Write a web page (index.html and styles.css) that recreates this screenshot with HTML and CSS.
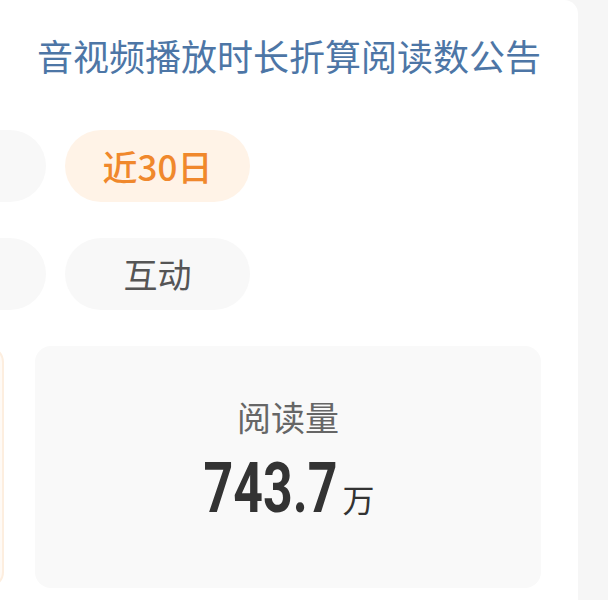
FILE: index.html
```html
<!DOCTYPE html>
<html lang="zh-CN">
<head>
  <meta charset="UTF-8" />
  <meta name="viewport" content="width=device-width, initial-scale=1.0" />
  <title>阅读数据</title>
  <link rel="stylesheet" href="styles.css">
</head>
<body>

  <div class="panel">
    <div class="notice">音视频播放时长折算阅读数公告</div>

    <!-- 时间筛选 (前一项已滑出可视区) -->
    <div class="pill-row">
      <div class="pill"></div>
      <div class="pill active">近30日</div>
    </div>

    <!-- 类型筛选 -->
    <div class="pill-row">
      <div class="pill"></div>
      <div class="pill">互动</div>
    </div>

    <!-- 数据卡片 -->
    <div class="card-row">
      <div class="stat-card selected"></div>
      <div class="stat-card">
        <div class="stat-label">阅读量</div>
        <div class="stat-value"><span class="num">743.7</span><span class="unit">万</span></div>
      </div>
    </div>
  </div>

</body>
</html>
```

FILE: styles.css
```css
body {
  margin: 0;
  background: #f6f6f6;
  font-family: "Noto Sans CJK SC", "Noto Sans", sans-serif;
  overflow: hidden;
}

.panel {
  width: 578px;
  min-height: 600px;
  background: #fff;
  border-top-right-radius: 14px;
  overflow: hidden;
  padding-top: 30px;
  box-sizing: border-box;
}

.notice {
  font-size: 36px;
  line-height: 50px;
  color: #4d76a6;
  text-align: center;
}

.pill-row {
  display: flex;
  gap: 19px;
  margin-left: -139px;
  margin-top: 36px;
}

.notice + .pill-row {
  margin-top: 50px;
}

.pill {
  flex: 0 0 185px;
  height: 72px;
  line-height: 72px;
  border-radius: 36px;
  background: #f8f8f8;
  color: #555;
  font-size: 34px;
  text-align: center;
}

.pill.active {
  background: #fff3e7;
  color: #f0882c;
  font-size: 35px;
  font-weight: 500;
}

.card-row {
  display: flex;
  gap: 31px;
  margin-left: -502px;
  margin-top: 36px;
}

.stat-card {
  flex: 0 0 506px;
  height: 242px;
  box-sizing: border-box;
  border-radius: 16px;
  background: #f9f9f9;
  padding-top: 51px;
  text-align: center;
}

.stat-card.selected {
  background: #fffaf5;
  border: 2px solid #fdeedf;
}

.stat-label {
  font-size: 34px;
  line-height: 40px;
  color: #666;
}

.stat-value {
  margin-top: 16px;
  color: #333;
  line-height: 70px;
  height: 70px;
}

.num {
  display: inline-block;
  font-family: Roboto, "Liberation Sans", sans-serif;
  font-weight: 700;
  font-size: 70px;
  transform: scaleX(0.74);
  margin: 0 -22px;
}

.unit {
  font-size: 32px;
  margin-left: 4px;
}
```
